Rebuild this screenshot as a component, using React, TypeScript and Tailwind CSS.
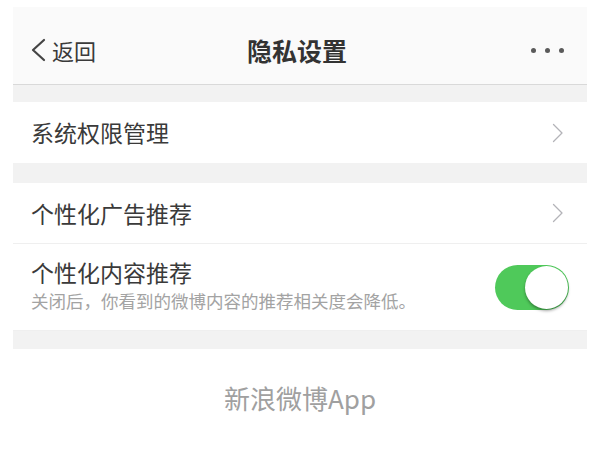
import React, { useState } from 'react';

const font = { fontFamily: '"Noto Sans CJK SC", "Noto Sans", sans-serif' };

function Chevron() {
  return (
    <svg width="12" height="20" viewBox="0 0 12 20" fill="none">
      <path d="M1.5 1.5L10 10L1.5 18.5" stroke="#b3b3b8" strokeWidth="1.3" strokeLinecap="round" strokeLinejoin="round" />
    </svg>
  );
}

export default function App() {
  const [on, setOn] = useState(true);

  return (
    <div className="w-[600px] h-[450px] bg-white px-[13px] pt-[7px] overflow-hidden" style={font}>
      {/* 顶部导航 */}
      <div className="h-[78px] bg-[#fafafa] border-b border-[#d9d9d9] flex items-center justify-between pl-[17px] pr-[23px] pt-[9px]">
        <div className="flex items-center gap-[5px] w-[120px]">
          <svg width="17" height="24" viewBox="0 0 17 24" fill="none">
            <path d="M14 2L3 12L14 22" stroke="#444" strokeWidth="2.2" strokeLinecap="round" strokeLinejoin="round" />
          </svg>
          <span className="text-[22px] text-[#3a3a3a] leading-none">返回</span>
        </div>
        <h1 className="text-[25px] font-bold text-[#333] leading-none">隐私设置</h1>
        <div className="w-[120px] flex justify-end gap-[9px]">
          <span className="w-[5px] h-[5px] rounded-full bg-[#5a5a5a]" />
          <span className="w-[5px] h-[5px] rounded-full bg-[#5a5a5a]" />
          <span className="w-[5px] h-[5px] rounded-full bg-[#5a5a5a]" />
        </div>
      </div>

      <div className="h-[17px] bg-[#f2f2f2]" />

      <div className="h-[61px] flex items-center justify-between pl-[18px] pr-[23px]">
        <span className="text-[23px] text-[#3a3a3a]">系统权限管理</span>
        <Chevron />
      </div>

      <div className="h-[20px] bg-[#f2f2f2]" />

      <div className="h-[61px] flex items-center justify-between pl-[18px] pr-[23px] border-b border-[#efefef]">
        <span className="text-[23px] text-[#3a3a3a]">个性化广告推荐</span>
        <Chevron />
      </div>

      <div className="h-[87px] flex items-center justify-between pl-[18px] pr-[18px] border-b border-[#efefef]">
        <div className="flex flex-col pb-[2px]">
          <span className="text-[23px] text-[#3a3a3a] leading-[30px]">个性化内容推荐</span>
          <span className="text-[17.5px] text-[#a3a3a3] leading-[28px]">关闭后，你看到的微博内容的推荐相关度会降低。</span>
        </div>
        <button
          onClick={() => setOn(!on)}
          className={`relative w-[74px] h-[45px] rounded-full ${on ? 'bg-[#4fc95a]' : 'bg-[#e5e5e5]'}`}
        >
          <span
            className={`absolute top-[1px] w-[43px] h-[43px] rounded-full bg-white shadow-[0_2px_3px_rgba(0,0,0,0.35)] ${on ? 'right-[1px]' : 'left-[1px]'}`}
          />
        </button>
      </div>

      <div className="h-[18px] bg-[#f2f2f2]" />

      <div className="pt-[29px] text-center text-[26px] text-[#a0a0a0]">新浪微博App</div>
    </div>
  );
}
